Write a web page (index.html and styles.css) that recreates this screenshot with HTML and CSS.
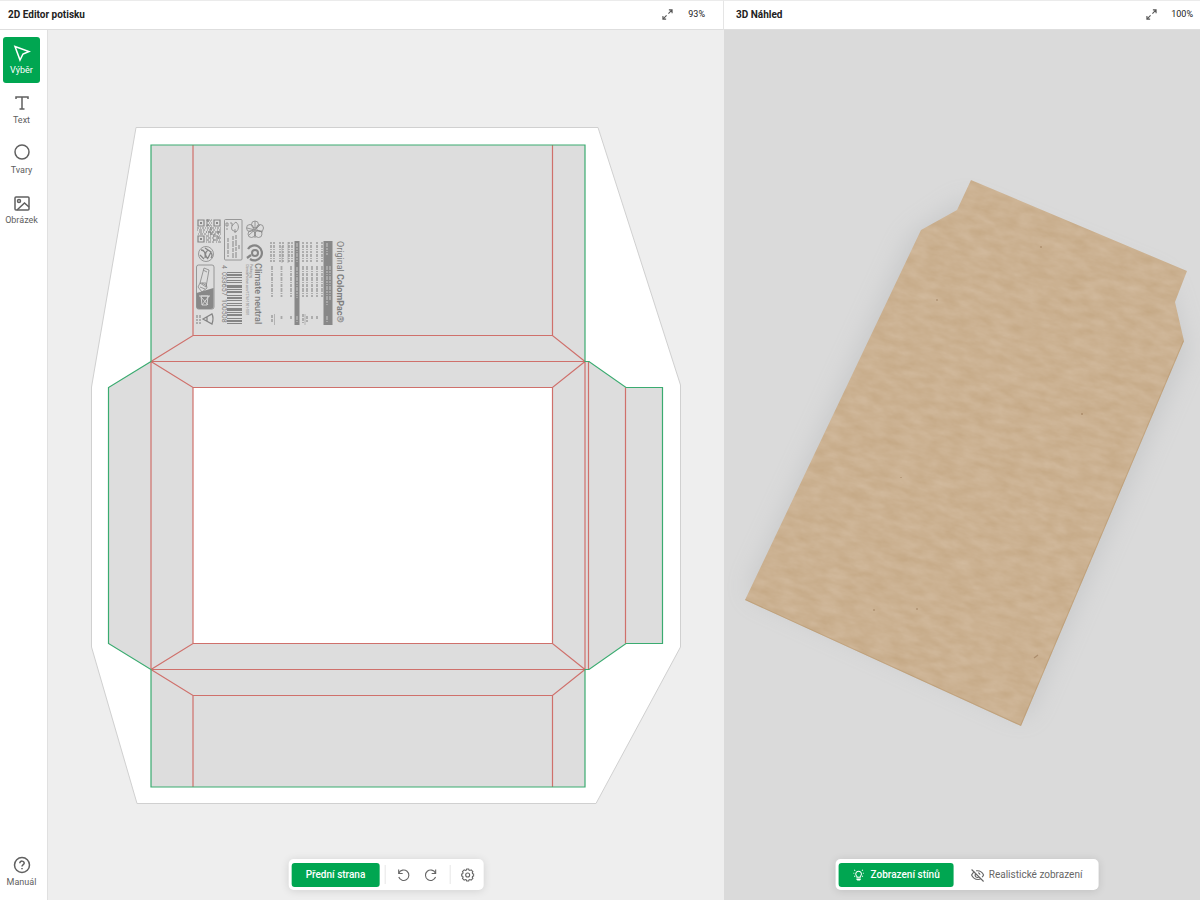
FILE: index.html
```html
<!DOCTYPE html>
<html lang="cs">
<head>
<meta charset="utf-8">
<meta name="viewport" content="width=device-width, initial-scale=1">
<title>2D Editor potisku</title>
<link rel="stylesheet" href="styles.css">
</head>
<body>
<main class="app">
  <section class="panel panel-editor">
    <header class="panel-header">
      <h2 class="panel-title">2D Editor potisku</h2>
      <button class="expand" type="button" aria-label="Zvětšit editor">
        <svg class="icon-expand" viewBox="0 0 12 12"><path d="M7 5l4-4M7.500 1H11v3.500M5 7l-4 4M1 7.500V11h3.500"/></svg>
      </button>
      <span class="zoom">93%</span>
    </header>
    <div class="workspace">
      <nav class="sidebar">
        <button class="tool tool-active" type="button">
          <svg class="icon" viewBox="0 0 18 18"><path d="M2 2.500l14 5-6 2.500-3 6z"/></svg>
          <span>Výběr</span>
        </button>
        <button class="tool" type="button">
          <svg class="icon" viewBox="0 0 18 18"><path d="M3 5V3h12v2M9 3v12M6.500 15h5"/></svg>
          <span>Text</span>
        </button>
        <button class="tool" type="button">
          <svg class="icon" viewBox="0 0 18 18"><circle cx="9" cy="8" r="7"/></svg>
          <span>Tvary</span>
        </button>
        <button class="tool" type="button">
          <svg class="icon" viewBox="0 0 18 18"><rect x="2" y="3" width="14" height="13" rx="1"/><circle cx="6" cy="7" r="1.500"/><path d="M4 16l7.500-7 4.500 4"/></svg>
          <span>Obrázek</span>
        </button>
        <button class="tool tool-help" type="button">
          <svg class="icon" viewBox="0 0 18 18"><circle cx="9" cy="9" r="7.500"/><path d="M6.800 7.300c0-3 4.600-2.800 4.400 0C11.100 8.700 9 8.700 9 10.500M9 12v1.300"/></svg>
          <span>Manuál</span>
        </button>
      </nav>
      <div class="canvas">
        <svg class="drawing" viewBox="48 30 676 870" role="img" aria-label="Rozložený tvar obálky">
          <path class="sheet" d="M136 127.500H598L680.500 385V647L596 803.500H137L91.500 647V387z"/>
          <path class="board" d="M151 145H585V361.500H589L626 387.500H663V643.500H626L589 669.500H585V787H151V669.500L108.500 643.500V387.500L151 361.500z"/>
          <path class="window" d="M193 387.500H552.500V643.500H193z"/>
          <path class="fold" d="M193 145V335.500M552.500 145V335.500M151 361.500L193 335.500H552.500L585 361.500M151 361.500H589M151 361.500L193 387.500H552.500L585 361.500M193 387.500V643.500M552.500 387.500V643.500M151 361.500V669.500M585 361.500V669.500M588.500 361.500V669.500M625.500 387.500V643.500M151 669.500L193 643.500H552.500L585 669.500M151 669.500H589M151 669.500L193 695.500H552.500L585 669.500M193 695.500V787M552.500 695.500V787"/>
          <path class="cut" d="M151 361.500V145H585V361.500H589L626 387.500H662.500V643.500H626L589 669.500H585V787H151V669.500L108.500 643.500V387.500L151 361.500"/>

          <g class="print">
            <g class="qr">
              <path d="M198 220h6v6h-6zM214 220h6v6h-6zM198 236h6v6h-6z"/>
              <path class="fill" d="M200 222h2v2h-2zM216 222h2v2h-2zM200 238h2v2h-2z"/>
              <path stroke-dasharray="2 1 1 1" d="M206 220h6M206 223h6M206 226h6M197 228h24"/>
              <path stroke-dasharray="1 1 3 1 2 2" d="M197 230h24M206 232h15M198 234h23M206 238h15M206 242h15"/>
              <path stroke-dasharray="3 1 1 2 1 1" d="M206 221h6M206 225h7M199 232h22M206 236h15M206 240h15"/>
              <path stroke-dasharray="3 2" d="M208 219v7M211 227v8M214 234v7M218 231v9"/>
            </g>

            <g class="line">
              <rect x="224.500" y="219.500" width="17.500" height="40.500" rx="1"/>
              <path d="M226 223h2v3h-2zM226 229h2M230 223h2v3M236 222q-6 4-4 8l4 2q5-5 0-10M235 229v4"/>
              <path class="faint" stroke-dasharray="4 1 6 1" d="M228 238v19M233 236v22M236 235v23M239 245v5"/>
            </g>
            <g class="line">
              <circle cx="255" cy="224.500" r="3.500"/><circle cx="250" cy="228" r="3.500"/><circle cx="251.500" cy="234" r="3.500"/><circle cx="258.500" cy="234" r="3.500"/><circle cx="260" cy="228" r="3.500"/>
              <path d="M255 221v17M247 228l16 4M249 235l11-10"/>
            </g>
            <g class="line">
              <circle cx="206" cy="254" r="7.500"/>
              <path class="bold" d="M201 250q5 0 4 8M205 248l6 4-3 6M208 250q-5 4 0 9M200 255l4 4M211 253q2 2 0 5"/>
            </g>
            <path class="climate-ring" d="M248 249a7.500 7.500 0 1 1 2 10"/>
            <circle class="climate-inner" cx="255" cy="253" r="3"/>
            <path class="climate-ring" d="M247 258l4-3"/>

            <g class="line">
              <rect x="196.500" y="265" width="17.500" height="44" rx="2"/>
              <path d="M200 283l4-15 5 2-3 17zM200 283l-2 4 4 5 5-4-1-5zM202 283l5 3M203 270l4 2M200 287l5 2"/>
              <path class="fill" d="M196.500 293l17-5v18q0 3-3 3h-11q-3 0-3-3z"/>
              <path class="cutout" d="M201 296h7l-1 9h-5zM199 296h11M202 305l7-9M201 297l7 8"/>
              <path class="bold" d="M203 319l9-5q2 4 0 10zM207 317v4"/>
            </g>
            <path class="microprint" stroke-dasharray="3 1 2 1" d="M197 315v9M200 315v9"/>

            <path class="bars" d="M234.500 272V324" stroke-dasharray="1 1 2 1 1 2 1 1 1 2 3 1 1 1 2 2"/>
            <text class="digits" transform="translate(222 265) rotate(90)">4</text>
            <text class="digits" transform="translate(222 272) rotate(90)">033657</text>
            <text class="digits" transform="translate(222 299) rotate(90)">100508</text>

            <text class="climate" transform="translate(255 263) rotate(90)">Climate neutral</text>
            <text class="tiny" transform="translate(250 264) rotate(90)">Packaging</text>
            <text class="tiny" transform="translate(246 264) rotate(90)">ClimatePartner.com/12761-1901-1001</text>

            <path class="fill" d="M294.500 241h5v84h-5zM323.500 241h9v84h-9z"/>
            <path class="microprint" stroke-dasharray="2 1 3 1 1 1" d="M271 242v20M274 242v20M280 242v20M283 242v20M289 242v20M292 242v20M303 242v20M307 242v20M311 242v20M317 242v20M322 242v20"/>
            <path class="microprint" stroke-dasharray="4 1 1 1 3 1" d="M272 266v31M281.500 266v31M291 266v31M303 266v31M307 266v31M312 266v31M317 266v31M322 266v31"/>
            <path class="microprint" stroke-dasharray="3 1" d="M272 315v7M281.500 316v3M291 316v3M303 314v9M307 316v6M312 316v3M317 316v3"/>
            <path class="line rule" d="M274.500 314v11M305 314v11M282 246v17M288 242v21"/>
            <path class="inverse" stroke-dasharray="4 1 2 1 1 1" d="M297 243v20M297 267v31M327 243v12M327 266v39M330 266v34M327 316v6M297 316v6"/>
            <text class="brand" transform="translate(337 241) rotate(90)">Original <tspan class="brand-bold">ColomPac®</tspan></text>
          </g>
        </svg>
        <div class="toolbar toolbar-editor">
          <button class="primary" type="button">Přední strana</button>
          <span class="divider"></span>
          <button class="tool-icon" type="button" aria-label="Zpět"><svg class="icon-small" viewBox="0 0 14 14"><path d="M2 1.500v4h4M2.300 5a5.200 5.200 0 1 1-.2 4"/></svg></button>
          <button class="tool-icon" type="button" aria-label="Znovu"><svg class="icon-small" viewBox="0 0 14 14"><path d="M12 1.500v4H8M11.700 5a5.200 5.200 0 1 0 .2 4"/></svg></button>
          <span class="divider"></span>
          <button class="tool-icon" type="button" aria-label="Nastavení"><svg class="icon-small" viewBox="0 0 14 14"><path d="M5.700 2L6 1h2l.3 1 1 .4 1.200-.6 1.700 1.700-.6 1.200.4 1 1 .3v2l-1 .3-.4 1 .6 1.200-1.700 1.700-1.200-.6-1 .4L8 13H6l-.3-1-1-.4-1.200.6-1.700-1.700.6-1.200-.4-1L1 8V6l1-.3.4-1-.6-1.200 1.700-1.700 1.200.6z"/><circle cx="7" cy="7" r="2"/></svg></button>
        </div>
      </div>
    </div>
  </section>

  <section class="panel panel-preview">
    <header class="panel-header">
      <h2 class="panel-title">3D Náhled</h2>
      <button class="expand" type="button" aria-label="Zvětšit náhled">
        <svg class="icon-expand" viewBox="0 0 12 12"><path d="M7 5l4-4M7.500 1H11v3.500M5 7l-4 4M1 7.500V11h3.500"/></svg>
      </button>
      <span class="zoom">100%</span>
    </header>
    <div class="stage">
      <svg class="drawing" viewBox="724 30 476 870" role="img" aria-label="Kartonová obálka">
        <defs>
          <filter id="blur" x="-20%" y="-20%" width="140%" height="140%"><feGaussianBlur stdDeviation="13"/></filter>
          <filter id="fibres" x="0" y="0" width="100%" height="100%" color-interpolation-filters="sRGB">
            <feTurbulence type="fractalNoise" baseFrequency="0.05 0.12" numOctaves="5" seed="8"/>
            <feColorMatrix values="0.06 0 0 0 0.767  0.08 0 0 0 0.655  0.11 0 0 0 0.515  0 0 0 0 1"/>
          </filter>
          <clipPath id="outline"><path d="M971 180L1187 271L1175 302L1184 341L1021 726L745 600L921 230L957 210z"/></clipPath>
        </defs>
        <path class="shadow" filter="url(#blur)" d="M965 200L1165 280L1186 350L1026 718L748 592L912 236z"/>
        <g clip-path="url(#outline)">
          <rect x="560" y="60" width="820" height="800" filter="url(#fibres)" transform="rotate(14 965 455)"/>
          <path class="edge" d="M745 600L1021 726L1184 341"/>
          <path class="specks" d="M1041 246v2M937 299v2M1081 414h2M901 477v1M917 608v2M1034 658l4-3M874 609v2"/>
        </g>
      </svg>
      <div class="toolbar toolbar-preview">
        <button class="primary" type="button">
          <svg class="icon-bulb" viewBox="0 0 14 14"><path d="M5 8.500a3.300 3.300 0 1 1 4 0v1H5zM1 5h1M12 5h1M2 1l1 1M12 1l-1 1M2 9l1-1M12 9l-1-1"/><path class="fill-bulb" d="M4.500 11h5v1l-1 1.500h-3l-1-1.500z"/></svg>
          <span>Zobrazení stínů</span>
        </button>
        <button class="realistic" type="button">
          <svg class="icon-small" viewBox="0 0 14 14"><path d="M1 1.500l12 12M4 3.500Q2 4.800 1 7q2 4.500 6.500 4.500 1.500 0 2.800-.7M5.500 2.800Q10.700 2 13 7q-.6 1.300-1.500 2.200M5.300 5.700a2.200 2.200 0 0 0 3.200 3.200M7.500 4.800q1.700.3 1.900 2"/></svg>
          <span>Realistické zobrazení</span>
        </button>
      </div>
    </div>
  </section>
</main>
</body>
</html>
```
FILE: styles.css
```css
* { box-sizing: border-box; }
body {
  margin: 0;
  font-family: Roboto, "Liberation Sans", sans-serif;
  font-size: 10px;
  color: #222;
}
button {
  font: inherit;
  color: inherit;
  padding: 0;
  border: 0;
  background: none;
  cursor: pointer;
}
svg { display: block; fill: none; stroke: currentColor; }
.app {
  display: grid;
  grid-template-columns: 724fr 476fr;
  height: 100vh;
  overflow: hidden;
}
.panel { display: flex; flex-direction: column; min-width: 0; min-height: 0; }
.panel-header {
  display: flex;
  align-items: center;
  height: 30px;
  flex: none;
  padding: 0 18px 2px 8px;
  border-top: 1px solid #ebebeb;
  border-bottom: 1px solid #dedede;
  background: #fff;
}
.panel-editor .panel-header { border-right: 1px solid #e5e5e5; }
.panel-preview .panel-header { padding: 0 7px 2px 12px; }
.panel-title { margin: 0; font-size: 10px; font-weight: 700; }
.expand { margin-left: auto; margin-right: 15px; color: #555; }
.panel-preview .expand { margin-right: 14px; }
.icon-expand { width: 11px; height: 11px; stroke-width: 1.2; }
.zoom { font-size: 9px; }
.workspace { display: flex; flex: 1; min-height: 0; }
.sidebar {
  display: flex;
  flex-direction: column;
  gap: 4px;
  flex: none;
  width: 48px;
  padding: 7px 7px 5px 3px;
  border-right: 1px solid #e0e0e0;
  background: #fff;
}
.tool {
  display: flex;
  flex-direction: column;
  align-items: center;
  justify-content: center;
  gap: 2px;
  height: 46px;
  border-radius: 3px;
  font-size: 9px;
  line-height: 12px;
  color: #606060;
}
.tool-active { background: #00a651; color: #fff; }
.tool-help { margin-top: auto; }
.icon { width: 18px; height: 18px; flex: none; stroke-width: 1.5; }
.canvas { position: relative; flex: 1; min-width: 0; background: #eee; }
.stage { position: relative; flex: 1; min-height: 0; background: #dadada; }
.drawing { width: 100%; height: 100%; }

.sheet { fill: #fff; stroke: #d0d0d0; stroke-width: 1; }
.board { fill: #ddd; stroke: none; }
.window { fill: #fff; stroke: none; }
.fold { stroke: #cf706b; stroke-width: 1.2; }
.cut { stroke: #3aab70; stroke-width: 1.2; }

.print { color: #858585; }
.print text { fill: #7c7c7c; stroke: none; }
.qr { stroke-width: 1.2; }
.line { stroke-width: 0.8; }
.bold { stroke-width: 1.3; }
.faint { stroke-width: 1; }
.fill { fill: #888; stroke: none; }
.cutout { stroke: #ddd; stroke-width: 0.9; }
.climate-ring { stroke-width: 2.2; }
.climate-inner { stroke-width: 2; }
.bars { stroke-width: 15; }
.microprint { stroke-width: 1.8; opacity: 0.6; }
.inverse { stroke: #c8c8c8; stroke-width: 1; }
.rule { opacity: 0.6; }
.digits { font-size: 7px; }
.climate { font-size: 9px; font-weight: 500; }
.tiny { font-size: 3px; }
.brand { font-size: 9px; }
.brand-bold { font-weight: 700; }

.shadow { fill: #8d9296; stroke: none; opacity: 0.25; }
.edge { stroke: #b08d60; stroke-width: 2; opacity: 0.4; }
.specks { stroke: #8f6b49; stroke-width: 1.3; opacity: 0.5; }

.toolbar {
  position: absolute;
  bottom: 10px;
  left: 50%;
  transform: translateX(-50%);
  display: flex;
  align-items: center;
  height: 31px;
  padding: 0 3px;
  border-radius: 5px;
  background: #fff;
  box-shadow: 0 1px 8px rgba(0, 0, 0, 0.12);
  white-space: nowrap;
  color: #666;
}
.toolbar-preview { margin-left: 5px; }
.primary {
  display: flex;
  align-items: center;
  justify-content: center;
  gap: 6px;
  height: 24px;
  padding: 0 14px;
  border-radius: 3px;
  background: #00a651;
  color: #fff;
  font-weight: 500;
}
.realistic {
  display: flex;
  align-items: center;
  gap: 4px;
  height: 24px;
  padding: 0 13px 0 17px;
}
.divider { width: 1px; height: 19px; margin: 0 5px; background: #e6e6e6; }
.tool-icon { display: grid; place-items: center; width: 27px; height: 24px; }
.divider + .tool-icon:last-child { width: 25px; }
.icon-small { width: 14px; height: 14px; stroke-width: 1.1; }
.icon-bulb { width: 12px; height: 12px; stroke-width: 1.2; }
.fill-bulb { fill: #fff; stroke: none; }
```
